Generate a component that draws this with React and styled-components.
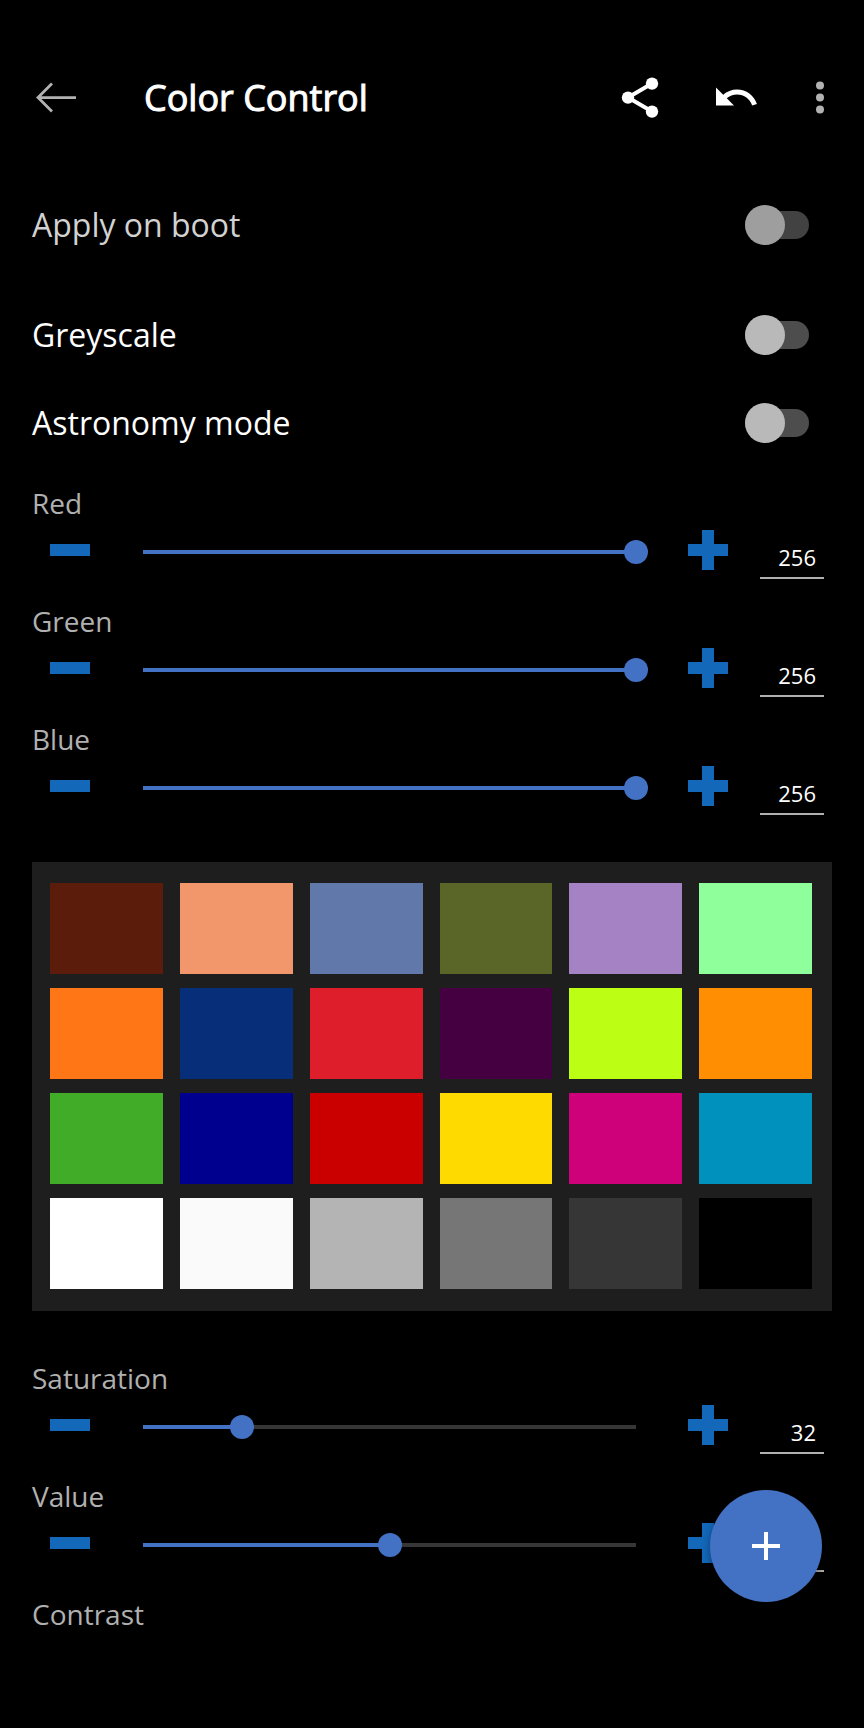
import React, { useState } from "react";
import styled, { createGlobalStyle } from "styled-components";

const GlobalStyle = createGlobalStyle`
  * { box-sizing: border-box; }
  body { margin: 0; background: #000; }
  button, input { font: inherit; color: inherit; }
`;

const Page = styled.div`
  min-height: 100vh;
  padding-top: 48px;
  background: #000;
  color: #fff;
  font-family: "Open Sans", "Noto Sans", sans-serif;
`;

const AppBar = styled.header`
  display: flex;
  align-items: center;
  height: 100px;
  padding: 0 20px 0 32px;
`;

const Title = styled.h1`
  flex: 1;
  margin: 0 0 0 64px;
  font-size: 36px;
  line-height: 48px;
  font-weight: 400;
  -webkit-text-stroke: 1px currentColor;
`;

const Actions = styled.div`
  display: flex;
  gap: 48px;
  margin-right: 36px;
`;

const IconButton = styled.button`
  display: flex;
  width: 48px;
  height: 48px;
  padding: 0;
  border: 0;
  background: none;
  color: ${(p) => (p.$dim ? "#b2b2b2" : "#fff")};
  cursor: pointer;
`;

const Content = styled.main`
  padding: 33px 32px 96px;
`;

const SwitchRow = styled.label`
  display: flex;
  align-items: center;
  justify-content: space-between;
  height: 88px;
  padding-right: 23px;
  margin-bottom: ${(p) => (p.$spaced ? "22px" : "0")};
  font-size: 32px;
  line-height: 44px;
  color: ${(p) => (p.$muted ? "#d2d2d2" : "#fff")};
`;

const Switch = styled.input`
  appearance: none;
  display: flex;
  align-items: center;
  width: 64px;
  height: 28px;
  margin: 0;
  border-radius: 14px;
  background: ${(p) => (p.$muted ? "#424242" : "#4d4d4d")};
  cursor: pointer;
  &::before {
    content: "";
    flex: none;
    width: 40px;
    height: 40px;
    border-radius: 50%;
    background: ${(p) => (p.$muted ? "#9e9e9e" : "#b9b9b9")};
  }
  &:checked::before {
    margin-left: auto;
    background: #4371c4;
  }
`;

const Group = styled.section`
  padding-top: ${(p) => p.$top || 0}px;
`;

const Control = styled.div`
  height: 118px;
`;

const ControlLabel = styled.label`
  display: block;
  margin-bottom: 2px;
  font-size: 28px;
  line-height: 36px;
  color: #b0b0b0;
`;

const ControlRow = styled.div`
  display: flex;
  align-items: flex-start;
  padding-right: 8px;
`;

const StepButton = styled.button`
  display: flex;
  align-items: center;
  justify-content: center;
  width: 76px;
  height: 54px;
  padding: 0;
  border: 0;
  background: none;
  color: #1368ba;
  cursor: pointer;
`;

const Slider = styled.input`
  appearance: none;
  flex: 1;
  min-width: 0;
  height: 58px;
  margin: 0 22px 0 23px;
  background: none;
  cursor: pointer;
  &::-webkit-slider-runnable-track {
    height: 4px;
    background: linear-gradient(
        to right,
        #4371c4 ${(p) => p.$percent}%,
        #363636 ${(p) => p.$percent}%
      )
      center / calc(100% - 24px) 4px no-repeat;
  }
  &::-webkit-slider-thumb {
    appearance: none;
    width: 24px;
    height: 24px;
    margin-top: -10px;
    border-radius: 50%;
    background: #4371c4;
  }
`;

const ValueInput = styled.input`
  width: 64px;
  height: 56px;
  margin-left: 14px;
  padding: 14px 8px 0 0;
  border: 0;
  border-bottom: 2px solid #b0b0b0;
  border-radius: 0;
  background: none;
  font-size: 22px;
  line-height: 32px;
  text-align: right;
`;

const Palette = styled.div`
  display: grid;
  grid-template-columns: repeat(6, 1fr);
  gap: 14px 17px;
  margin-top: 23px;
  padding: 21px 20px 22px 18px;
  background: #1e1e1e;
`;

const Swatch = styled.div`
  height: 91px;
  background: ${(p) => p.$color};
`;

const Fab = styled.button`
  position: fixed;
  right: 42px;
  bottom: 126px;
  display: flex;
  align-items: center;
  justify-content: center;
  width: 112px;
  height: 112px;
  padding: 0;
  border: 0;
  border-radius: 50%;
  background: #4371c4;
  color: #fff;
  box-shadow: 0 4px 8px rgba(0, 0, 0, 0.4);
  cursor: pointer;
`;

const SWATCHES = [
  "#5c1c0c", "#f2966c", "#6078aa", "#5a6628", "#a482c4", "#8eff9a",
  "#ff7616", "#072e78", "#de1e2a", "#440040", "#bcff14", "#ff8e02",
  "#40ac28", "#00008e", "#ca0000", "#ffda00", "#ce007a", "#0092bc",
  "#ffffff", "#fafafa", "#b4b4b4", "#767676", "#363636", "#000000",
];

const BackIcon = () => (
  <svg width="48" height="48" viewBox="0 0 48 48" fill="none" stroke="currentColor" strokeWidth="2.8">
    <path d="M44 23.6H6M20 9.6L6 23.6l14 14" />
  </svg>
);

const ShareIcon = () => (
  <svg width="48" height="48" viewBox="0 0 48 48" fill="currentColor">
    <path d="M36 9.6L12 23.6l24 14" fill="none" stroke="currentColor" strokeWidth="4" />
    <circle cx="36" cy="9.6" r="6.2" />
    <circle cx="12" cy="23.6" r="6.2" />
    <circle cx="36" cy="37.6" r="6.2" />
  </svg>
);

const UndoIcon = () => (
  <svg width="48" height="48" viewBox="0 0 24 24" fill="currentColor">
    <path d="M12.5 7.8c-2.65 0-5.05.99-6.9 2.6L2 6.8v9h9l-3.62-3.62c1.39-1.16 3.16-1.88 5.12-1.88 3.54 0 6.55 2.31 7.6 5.5l2.37-.78C21.08 10.83 17.15 7.8 12.5 7.8z" />
  </svg>
);

const MoreIcon = () => (
  <svg width="48" height="48" viewBox="0 0 24 24" fill="currentColor">
    <circle cx="12" cy="5.8" r="2" />
    <circle cx="12" cy="11.8" r="2" />
    <circle cx="12" cy="17.8" r="2" />
  </svg>
);

const MinusIcon = () => (
  <svg width="40" height="40" viewBox="0 0 40 40" fill="currentColor">
    <path d="M0 14h40v12H0z" />
  </svg>
);

const PlusIcon = () => (
  <svg width="40" height="40" viewBox="0 0 40 40" fill="currentColor">
    <path d="M14 0h12v14h14v12H26v14H14V26H0V14h14z" />
  </svg>
);

function ToggleSetting({ label, muted, spaced }) {
  return (
    <SwitchRow $muted={muted} $spaced={spaced}>
      {label}
      <Switch type="checkbox" role="switch" $muted={muted} />
    </SwitchRow>
  );
}

function SliderControl({ label, initial, max }) {
  const [value, setValue] = useState(initial);
  const id = label.toLowerCase();
  const update = (next) => setValue(Math.max(0, Math.min(max, Number(next) || 0)));
  return (
    <Control>
      <ControlLabel htmlFor={id}>{label}</ControlLabel>
      <ControlRow>
        <StepButton type="button" aria-label={`Decrease ${id}`} onClick={() => update(value - 1)}>
          <MinusIcon />
        </StepButton>
        <Slider
          id={id}
          type="range"
          min="0"
          max={max}
          value={value}
          $percent={(value / max) * 100}
          onChange={(e) => update(e.target.value)}
        />
        <StepButton type="button" aria-label={`Increase ${id}`} onClick={() => update(value + 1)}>
          <PlusIcon />
        </StepButton>
        <ValueInput
          type="text"
          inputMode="numeric"
          aria-label={`${label} value`}
          value={value}
          onChange={(e) => update(e.target.value)}
        />
      </ControlRow>
    </Control>
  );
}

export default function App() {
  return (
    <Page>
      <GlobalStyle />
      <AppBar>
        <IconButton type="button" aria-label="Back" $dim>
          <BackIcon />
        </IconButton>
        <Title>Color Control</Title>
        <Actions>
          <IconButton type="button" aria-label="Share">
            <ShareIcon />
          </IconButton>
          <IconButton type="button" aria-label="Undo">
            <UndoIcon />
          </IconButton>
        </Actions>
        <IconButton type="button" aria-label="More options" $dim>
          <MoreIcon />
        </IconButton>
      </AppBar>
      <Content>
        <ToggleSetting label="Apply on boot" muted spaced />
        <ToggleSetting label="Greyscale" />
        <ToggleSetting label="Astronomy mode" />
        <Group $top={18}>
          <SliderControl label="Red" initial={256} max={256} />
          <SliderControl label="Green" initial={256} max={256} />
          <SliderControl label="Blue" initial={256} max={256} />
        </Group>
        <Palette role="img" aria-label="Color preview chart">
          {SWATCHES.map((color) => (
            <Swatch key={color} $color={color} />
          ))}
        </Palette>
        <Group $top={49}>
          <SliderControl label="Saturation" initial={32} max={160} />
          <SliderControl label="Value" initial={128} max={256} />
          <ControlLabel as="div">Contrast</ControlLabel>
        </Group>
      </Content>
      <Fab type="button" aria-label="Add profile">
        <svg width="28" height="28" viewBox="0 0 28 28" stroke="currentColor" strokeWidth="4">
          <path d="M14 0v28M0 14h28" />
        </svg>
      </Fab>
    </Page>
  );
}
